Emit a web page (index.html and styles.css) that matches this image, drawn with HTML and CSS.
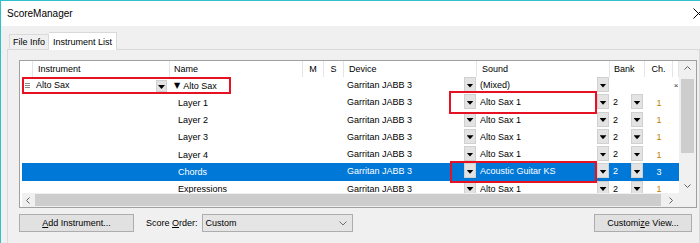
FILE: index.html
```html
<!DOCTYPE html>
<html lang="en">
<head>
    <meta charset="UTF-8">
    <title>ScoreManager</title>
    <link rel="stylesheet" href="styles.css">
</head>
<body>
    <div class="window">
        <div class="titlebar">
            <span class="title">ScoreManager</span>
            <svg class="close" width="11" height="11" viewBox="0 0 11 11">
                <path d="M0.5 0.5l10 10M10.5 0.5l-10 10" stroke="#000" stroke-width="1"></path>
            </svg>
        </div>

        <div class="dialog">
            <div class="tabs">
                <div class="tab">File Info</div>
                <div class="tab active">Instrument List</div>
            </div>

            <div class="page">
                <div class="grid-frame">
                    <div class="grid">
                        <div class="row head">
                            <div class="cell"></div>
                            <div class="cell c-inst">Instrument</div>
                            <div class="cell c-name">Name</div>
                            <div class="cell c-mid">M</div>
                            <div class="cell c-mid">S</div>
                            <div class="cell c-dev">Device</div>
                            <div class="cell c-sound">Sound</div>
                            <div class="cell c-bank">Bank</div>
                            <div class="cell c-mid">Ch.</div>
                            <div class="cell"></div>
                        </div>

                        <div class="row">
                            <div class="cell c-grip">
                                <svg width="5" height="5" viewBox="0 0 5 5"><path d="M0 0.5h5M0 2.5h5M0 4.5h5" stroke="#8a8a8a" stroke-width="1"></path></svg>
                            </div>
                            <div class="cell c-inst split">Alto Sax <span class="dd combo"></span></div>
                            <div class="cell c-name"><span class="tri">▼</span>Alto Sax</div>
                            <div class="cell"></div>
                            <div class="cell"></div>
                            <div class="cell c-dev split">Garritan JABB 3 <span class="dd"></span></div>
                            <div class="cell c-sound split">(Mixed) <span class="dd"></span></div>
                            <div class="cell"></div>
                            <div class="cell"></div>
                            <div class="cell c-x">×</div>
                        </div>

                        <div class="row">
                            <div class="cell"></div>
                            <div class="cell"></div>
                            <div class="cell c-name sub">Layer 1</div>
                            <div class="cell"></div>
                            <div class="cell"></div>
                            <div class="cell c-dev split">Garritan JABB 3 <span class="dd"></span></div>
                            <div class="cell c-sound split">Alto Sax 1 <span class="dd"></span></div>
                            <div class="cell c-bank split">2 <span class="dd"></span></div>
                            <div class="cell c-mid ch">1</div>
                            <div class="cell"></div>
                        </div>

                        <div class="row">
                            <div class="cell"></div>
                            <div class="cell"></div>
                            <div class="cell c-name sub">Layer 2</div>
                            <div class="cell"></div>
                            <div class="cell"></div>
                            <div class="cell c-dev split">Garritan JABB 3 <span class="dd"></span></div>
                            <div class="cell c-sound split">Alto Sax 1 <span class="dd"></span></div>
                            <div class="cell c-bank split">2 <span class="dd"></span></div>
                            <div class="cell c-mid ch">1</div>
                            <div class="cell"></div>
                        </div>

                        <div class="row">
                            <div class="cell"></div>
                            <div class="cell"></div>
                            <div class="cell c-name sub">Layer 3</div>
                            <div class="cell"></div>
                            <div class="cell"></div>
                            <div class="cell c-dev split">Garritan JABB 3 <span class="dd"></span></div>
                            <div class="cell c-sound split">Alto Sax 1 <span class="dd"></span></div>
                            <div class="cell c-bank split">2 <span class="dd"></span></div>
                            <div class="cell c-mid ch">1</div>
                            <div class="cell"></div>
                        </div>

                        <div class="row">
                            <div class="cell"></div>
                            <div class="cell"></div>
                            <div class="cell c-name sub">Layer 4</div>
                            <div class="cell"></div>
                            <div class="cell"></div>
                            <div class="cell c-dev split">Garritan JABB 3 <span class="dd"></span></div>
                            <div class="cell c-sound split">Alto Sax 1 <span class="dd"></span></div>
                            <div class="cell c-bank split">2 <span class="dd"></span></div>
                            <div class="cell c-mid ch">1</div>
                            <div class="cell"></div>
                        </div>

                        <div class="row selected">
                            <div class="cell"></div>
                            <div class="cell"></div>
                            <div class="cell c-name sub">Chords</div>
                            <div class="cell"></div>
                            <div class="cell"></div>
                            <div class="cell c-dev split">Garritan JABB 3 <span class="dd"></span></div>
                            <div class="cell c-sound split">Acoustic Guitar KS <span class="dd"></span></div>
                            <div class="cell c-bank split">2 <span class="dd"></span></div>
                            <div class="cell c-mid ch">3</div>
                            <div class="cell"></div>
                        </div>

                        <div class="row">
                            <div class="cell"></div>
                            <div class="cell"></div>
                            <div class="cell c-name sub">Expressions</div>
                            <div class="cell"></div>
                            <div class="cell"></div>
                            <div class="cell c-dev split">Garritan JABB 3 <span class="dd"></span></div>
                            <div class="cell c-sound split">Alto Sax 1 <span class="dd"></span></div>
                            <div class="cell c-bank split">2 <span class="dd"></span></div>
                            <div class="cell c-mid ch">1</div>
                            <div class="cell"></div>
                        </div>
                    </div>

                    <div class="vscroll">
                        <div class="arrow-v">
                            <svg width="7" height="4" viewBox="0 0 7 4"><path d="M0.5 3.5l3-3 3 3" fill="none" stroke="#606060"></path></svg>
                        </div>
                        <div class="track-v"><div class="thumb-v"></div></div>
                        <div class="arrow-v">
                            <svg width="7" height="4" viewBox="0 0 7 4"><path d="M0.5 0.5l3 3 3-3" fill="none" stroke="#606060"></path></svg>
                        </div>
                    </div>

                    <div class="hscroll">
                        <div class="arrow-h left">
                            <svg width="4" height="7" viewBox="0 0 4 7"><path d="M3.5 0.5l-3 3 3 3" fill="none" stroke="#606060"></path></svg>
                        </div>
                        <div class="thumb-h"></div>
                        <div class="arrow-h right">
                            <svg width="4" height="7" viewBox="0 0 4 7"><path d="M0.5 0.5l3 3-3 3" fill="none" stroke="#606060"></path></svg>
                        </div>
                    </div>

                    <div class="corner"></div>
                </div>

                <div class="actions">
                    <div class="btn btn-add"><span><u>A</u>dd Instrument...</span></div>
                    <span class="order-label">Score <u>O</u>rder:</span>
                    <div class="select">
                        <span>Custom</span>
                        <svg width="8" height="5" viewBox="0 0 8 5"><path d="M0.5 0.5l3.5 3.5 3.5-3.5" fill="none" stroke="#707070"></path></svg>
                    </div>
                    <div class="btn btn-custom"><span>Customi<u>z</u>e View...</span></div>
                </div>
            </div>
        </div>

        <!-- annotation boxes drawn over the grid -->
        <div class="mark mark-instrument"></div>
        <div class="mark mark-sound"></div>
        <div class="mark mark-chords"></div>
    </div>
</body>
</html>
```

FILE: styles.css
```css
/* ScoreManager dialog */
body {
    margin: 0;
    font-family: "Liberation Sans", Arial, sans-serif;
    font-size: 9px;
    color: #000;
    background: #f0f0f0;
}

.window {
    position: relative;
    width: 699px;
    height: 242px;
    border-top: 1px solid #2fc0cc;
    border-left: 1px solid #2fc0cc;
    background: #f0f0f0;
    overflow: hidden;
}

.titlebar {
    height: 25px;
    background: #fff;
    display: flex;
    align-items: center;
    justify-content: space-between;
    padding-left: 6px;
}

.title {
    font-size: 10px;
}

.close {
    margin-right: -4px;
    flex: none;
}

.dialog {
    padding: 6px 0 0 6px;
}

/* tabs */
.tabs {
    display: flex;
    align-items: flex-end;
    height: 17px;
    padding-left: 2px;
}

.tab {
    height: 15px;
    box-sizing: border-box;
    padding: 0 3px;
    border: 1px solid #d9d9d9;
    border-bottom: none;
    display: flex;
    align-items: center;
    background: #f0f0f0;
}

.tab.active {
    position: relative;
    height: 18px;
    margin-bottom: -1px;
    padding: 0 4px;
    border-left: none;
    background: #fff;
}

.page {
    height: 200px;
    border: 1px solid #d9d9d9;
    padding: 10px 0 0 11px;
}

/* grid */
.grid-frame {
    display: grid;
    grid-template-columns: 657px 17px;
    grid-template-rows: 132px 14px;
    width: max-content;
    border: 1px solid #a0a0a0;
    padding-left: 2px;
    background: #fff;
}

.grid {
    overflow: hidden;
}

.row {
    display: grid;
    grid-template-columns: 11px 137px 133px 21px 20px 133px 133px 35px 28px 6px;
    height: 17.25px;
}

.row.head {
    height: 16px;
}

.cell {
    display: flex;
    align-items: center;
    min-width: 0;
    overflow: hidden;
    white-space: nowrap;
}

.head .cell {
    border-right: 1px solid #e5e5e5;
}

.head .c-inst,
.head .c-dev,
.head .c-sound {
    padding-left: 5px;
}

.head .c-name,
.head .c-bank {
    padding-left: 4px;
}

.c-mid {
    justify-content: center;
}

.c-grip {
    justify-content: center;
}

.c-inst {
    padding-left: 3px;
}

.c-name {
    padding-left: 4px;
}

.c-name.sub {
    padding-left: 8px;
}

.tri {
    font-family: "DejaVu Sans", sans-serif;
    font-size: 8px;
    margin-right: 3px;
}

.c-dev,
.c-sound,
.c-bank {
    padding-left: 3px;
}

.split {
    justify-content: space-between;
    align-items: flex-start;
    line-height: 17px;
}

.c-dev .dd,
.c-sound .dd {
    margin-right: 1px;
}

.c-bank .dd {
    margin-right: 2px;
}

.c-inst .combo {
    width: 11px;
    height: 12px;
    margin: 3px 3px 0 0;
}

.c-x {
    justify-content: center;
    font-size: 8px;
    color: #333;
}

.ch {
    color: #c08000;
}

.dd {
    flex: none;
    width: 12px;
    height: 15px;
    box-sizing: border-box;
    background: #e3e3e3;
    border: 1px solid #d0d0d0;
    display: flex;
    align-items: center;
    justify-content: center;
    padding-top: 2px;
}

.dd::after {
    content: "";
    width: 7px;
    height: 4px;
    background: #000;
    clip-path: polygon(0 0, 100% 0, 50% 100%);
}

.row.selected {
    background: #0078d7;
    color: #fff;
}

.row.selected .ch {
    color: #fff;
}

/* scrollbars */
.vscroll {
    display: flex;
    flex-direction: column;
    align-items: center;
    background: #f0f0f0;
}

.arrow-v {
    height: 14px;
    display: flex;
    align-items: center;
    justify-content: center;
}

.track-v {
    flex: 1;
}

.thumb-v {
    width: 13px;
    height: 74px;
    margin-top: 4px;
    background: #cdcdcd;
}

.hscroll {
    display: flex;
    align-items: center;
    background: #f0f0f0;
}

.arrow-h {
    height: 14px;
    display: flex;
    align-items: center;
    justify-content: center;
}

.arrow-h.left {
    width: 11px;
}

.arrow-h.right {
    width: 16px;
}

.thumb-h {
    flex: 1;
    height: 12px;
    margin: 0 2px;
    background: #cdcdcd;
}

.corner {
    background: #f0f0f0;
}

/* bottom row */
.actions {
    display: flex;
    align-items: center;
    width: 673px;
    height: 18px;
    margin-top: 6px;
}

.btn {
    height: 18px;
    box-sizing: border-box;
    border: 1px solid #adadad;
    background: #e1e1e1;
    display: flex;
    align-items: center;
    justify-content: center;
}

.btn-add {
    width: 115px;
}

.order-label {
    margin-left: 12px;
}

.select {
    width: 151px;
    height: 18px;
    box-sizing: border-box;
    margin-left: 4px;
    padding: 0 5px 0 3px;
    border: 1px solid #adadad;
    background: #e5e5e5;
    display: flex;
    align-items: center;
    justify-content: space-between;
}

.btn-custom {
    width: 98px;
    margin-left: auto;
}

/* red annotation boxes */
.mark {
    position: absolute;
    box-sizing: border-box;
    border: 2px solid #e81123;
}

.mark-instrument {
    left: 21px;
    top: 76px;
    width: 209px;
    height: 17px;
}

.mark-sound {
    left: 448px;
    top: 90px;
    width: 148px;
    height: 23px;
}

.mark-chords {
    left: 449px;
    top: 160px;
    width: 147px;
    height: 22px;
}
```
